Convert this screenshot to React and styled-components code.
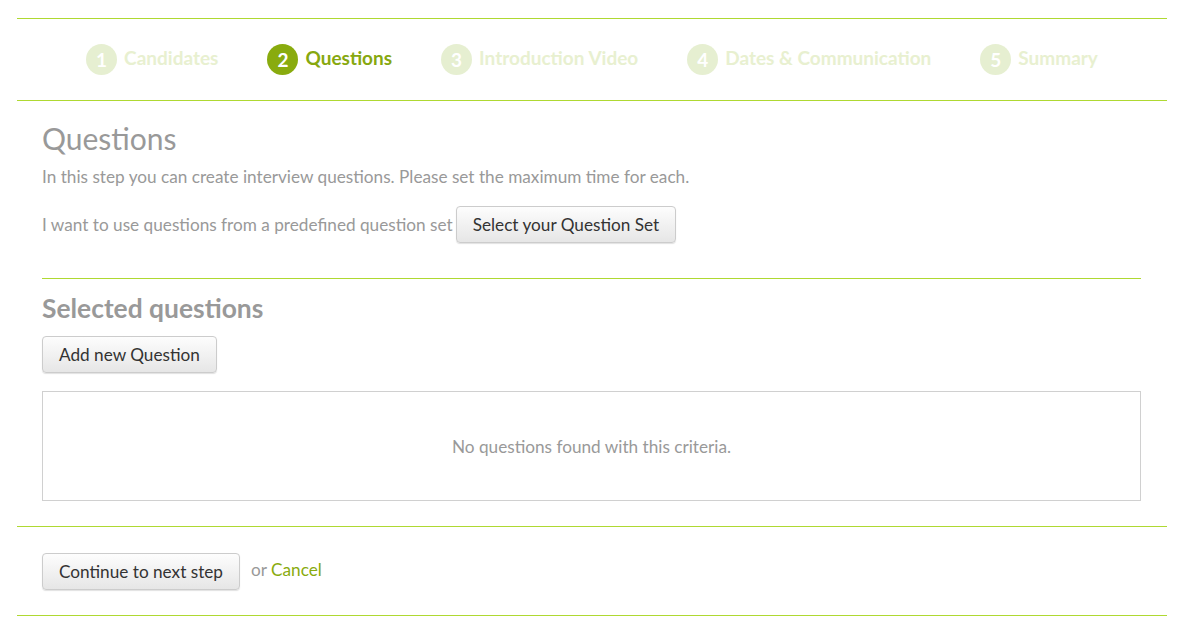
import React from 'react'
import styled, { createGlobalStyle } from "styled-components";

const GlobalStyle = createGlobalStyle`
    body{
        margin:0;
        background:#fff;
        font-family:Lato,"Open Sans","Liberation Sans",sans-serif;
    }
`;

const steps = [
    { n: 1, label: "Candidates" },
    { n: 2, label: "Questions", active: true },
    { n: 3, label: "Introduction Video" },
    { n: 4, label: "Dates & Communication" },
    { n: 5, label: "Summary" },
];

const App = () => {
    return (
        <PAGE>
            <GlobalStyle />
            <Steps>
                {steps.map((s) => (
                    <Step key={s.n} $active={s.active}>
                        <Circle $active={s.active}>{s.n}</Circle>
                        {s.label}
                    </Step>
                ))}
            </Steps>
            <Content>
                <Title>Questions</Title>
                <Text>In this step you can create interview questions. Please set the maximum time for each.</Text>
                <SetRow>
                    I want to use questions from a predefined question set
                    <Button>Select your Question Set</Button>
                </SetRow>
                <Divider />
                <SubTitle>Selected questions</SubTitle>
                <Button>Add new Question</Button>
                <EmptyBox>No questions found with this criteria.</EmptyBox>
            </Content>
            <Footer>
                <Button>Continue to next step</Button>
                <OrText>or <CancelLink href="#">Cancel</CancelLink></OrText>
            </Footer>
        </PAGE>
    )
}

const green = "#afd932";

const PAGE = styled.div`
    padding:18px 14px 0 17px;
    color:#999;
`;

const Steps = styled.div`
    display:flex;
    justify-content:center;
    align-items:center;
    gap:49px;
    height:81px;
    border-top:1px solid ${green};
    border-bottom:1px solid ${green};
`;

const Step = styled.div`
    display:flex;
    align-items:center;
    gap:7px;
    font-size:19px;
    font-weight:bold;
    color:${(p) => (p.$active ? "#87a80f" : "#e8f0d0")};
    margin-top:-5px;
`;

const Circle = styled.span`
    display:flex;
    justify-content:center;
    align-items:center;
    width:31px;
    height:31px;
    border-radius:50%;
    background:${(p) => (p.$active ? "#89ab0e" : "#e6efd1")};
    color:#fff;
    font-size:19px;
    font-weight:bold;
    margin-top:4px;
`;

const Content = styled.div`
    padding:19px 26px 25px 25px;
    border-bottom:1px solid ${green};
`;

const Title = styled.h1`
    margin:0;
    font-size:30px;
    font-weight:normal;
    line-height:1.2;
    color:#999;
`;

const Text = styled.p`
    margin:11px 0 0;
    font-size:17.2px;
    line-height:1.2;
`;

const SetRow = styled.div`
    display:flex;
    align-items:center;
    gap:3px;
    margin-top:18px;
    font-size:17.2px;
`;

const Button = styled.button`
    display:inline-flex;
    align-items:center;
    height:37px;
    padding:0 16px;
    font-family:inherit;
    font-size:17.2px;
    color:#333;
    background:linear-gradient(#fdfdfd,#e6e6e6);
    border:1px solid #ccc;
    border-radius:4px;
    box-shadow:0 1px 1px rgba(0,0,0,0.12);
    cursor:pointer;
`;

const Divider = styled.hr`
    margin:35px 0 0;
    border:0;
    border-top:1px solid ${green};
`;

const SubTitle = styled.h2`
    margin:14px 0 12px;
    font-size:26.4px;
    font-weight:bold;
    line-height:1.2;
    color:#999;
`;

const EmptyBox = styled.div`
    display:flex;
    justify-content:center;
    align-items:center;
    height:108px;
    margin-top:18px;
    border:1px solid #d0d0d0;
    font-size:17.2px;
    color:#999;
`;

const Footer = styled.div`
    display:flex;
    align-items:center;
    gap:11px;
    height:88px;
    padding-left:25px;
    border-bottom:1px solid ${green};
`;

const OrText = styled.span`
    font-size:17.2px;
    color:#999;
    margin-top:-4px;
`;

const CancelLink = styled.a`
    color:#89ab0e;
    text-decoration:none;
`;

export default App
